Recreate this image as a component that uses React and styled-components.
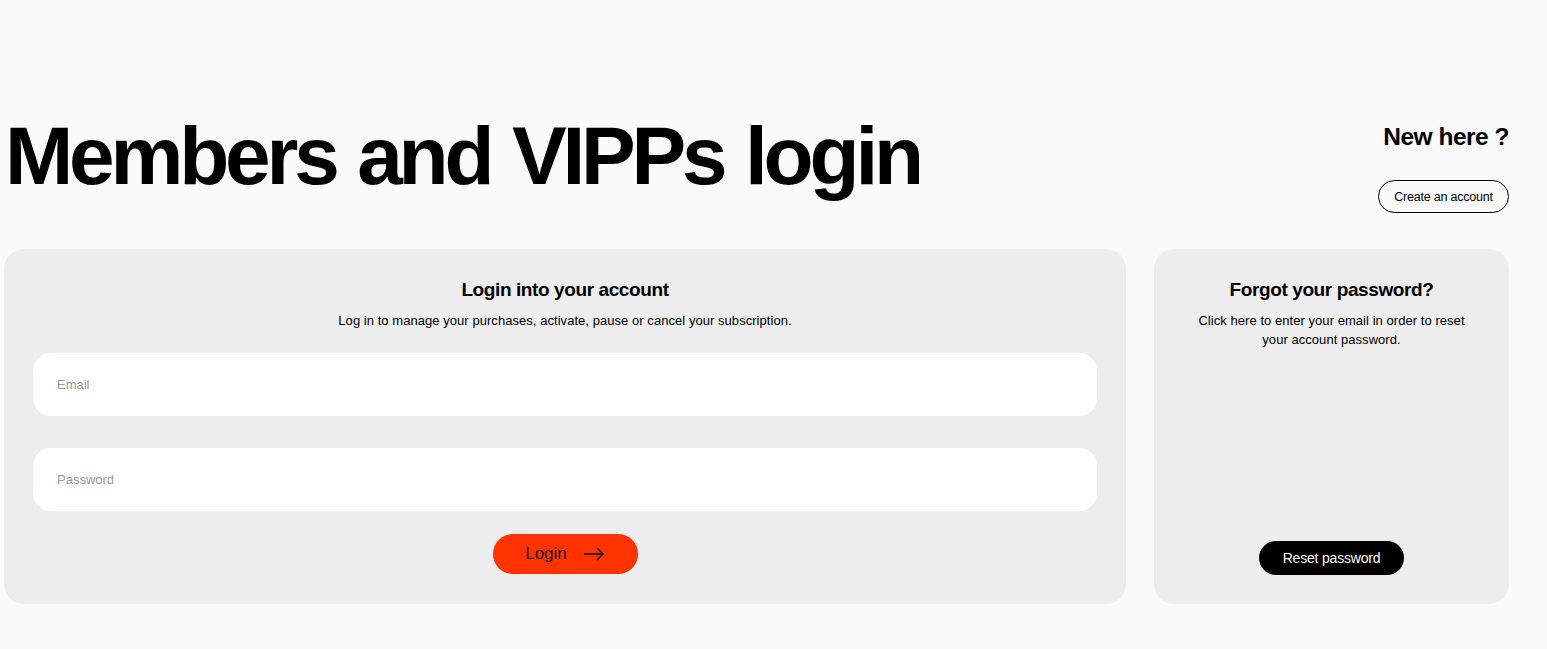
import React from "react";
import styled, { createGlobalStyle } from "styled-components";

const Global = createGlobalStyle`
  html, body {
    margin: 0;
    padding: 0;
    background: #fafafa;
    font-family: "Liberation Sans", Arial, sans-serif;
    color: #000;
  }
  * { box-sizing: border-box; }
`;

const Page = styled.div`
  width: 1505px;
  margin-left: 4px;
  padding-top: 104px;
`;

const Header = styled.div`
  display: flex;
  justify-content: space-between;
  align-items: flex-start;
`;

const Title = styled.h1`
  margin: 0;
  padding-left: 1px;
  font-size: 82px;
  line-height: 104px;
  font-weight: 700;
  letter-spacing: -4.2px;
  word-spacing: 3px;
`;

const Side = styled.div`
  display: flex;
  flex-direction: column;
  align-items: flex-end;
  padding-top: 18px;
`;

const NewHere = styled.h2`
  margin: 0;
  font-size: 24.5px;
  line-height: 30px;
  font-weight: 700;
  letter-spacing: -0.5px;
`;

const OutlineButton = styled.button`
  margin-top: 28px;
  height: 33px;
  width: 131px;
  border: 1px solid #000;
  border-radius: 17px;
  background: transparent;
  font-family: inherit;
  font-size: 12.5px;
  color: #000;
  letter-spacing: -0.2px;
`;

const Cards = styled.div`
  display: grid;
  grid-template-columns: 1122px 355px;
  gap: 28px;
  margin-top: 36px;
`;

const Card = styled.div`
  background: #ededed;
  border-radius: 20px;
  height: 355px;
  padding: 29px 29px;
  display: flex;
  flex-direction: column;
  align-items: center;
  text-align: center;
`;

const CardTitle = styled.h3`
  margin: 0;
  font-size: 19px;
  line-height: 24px;
  font-weight: 700;
  letter-spacing: -0.4px;
`;

const CardText = styled.p`
  margin: 9px 0 0;
  font-size: 13px;
  line-height: 19px;
  letter-spacing: 0.05px;
  max-width: ${p => p.$narrow ? "276px" : "none"};
`;

const Field = styled.input`
  width: 100%;
  height: 63px;
  border: none;
  border-radius: 18px;
  background: #fff;
  padding: 0 24px;
  font-family: inherit;
  font-size: 13px;
  margin-top: ${p => p.$first ? "23px" : "32px"};
  outline: none;
  &::placeholder { color: #9a9a9a; }
`;

const PrimaryButton = styled.button`
  margin-top: 23px;
  width: 145px;
  height: 40px;
  border: none;
  border-radius: 20px;
  background: #ff3300;
  color: #111;
  font-family: inherit;
  font-size: 17px;
  display: flex;
  align-items: center;
  justify-content: center;
  gap: 16px;
  padding-left: 6px;
`;

const DarkButton = styled.button`
  margin-top: auto;
  width: 145px;
  height: 34px;
  border: none;
  border-radius: 17px;
  background: #000;
  color: #fff;
  font-family: inherit;
  font-size: 14px;
  letter-spacing: -0.2px;
`;

const Arrow = () => (
  <svg width="22" height="14" viewBox="0 0 22 14" fill="none" stroke="#111" strokeWidth="1.6">
    <path d="M1 7h19" />
    <path d="M14 1l6 6-6 6" />
  </svg>
);

export default function App() {
  return (
    <>
      <Global />
      <Page>
        <Header>
          <Title>Members and VIPPs login</Title>
          <Side>
            <NewHere>New here ?</NewHere>
            <OutlineButton>Create an account</OutlineButton>
          </Side>
        </Header>
        <Cards>
          <Card>
            <CardTitle>Login into your account</CardTitle>
            <CardText>Log in to manage your purchases, activate, pause or cancel your subscription.</CardText>
            <Field $first placeholder="Email" />
            <Field type="password" placeholder="Password" />
            <PrimaryButton>Login <Arrow /></PrimaryButton>
          </Card>
          <Card>
            <CardTitle>Forgot your password?</CardTitle>
            <CardText $narrow>Click here to enter your email in order to reset your account password.</CardText>
            <DarkButton>Reset password</DarkButton>
          </Card>
        </Cards>
      </Page>
    </>
  );
}
